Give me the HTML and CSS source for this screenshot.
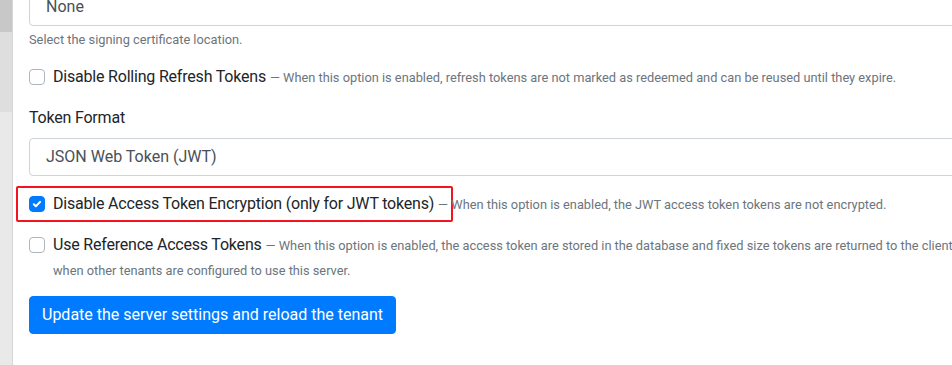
FILE: index.html
```html
<!DOCTYPE html>
<html lang="en">
<head>
    <meta charset="UTF-8">
    <title>Server Settings</title>
    <link rel="stylesheet" href="styles.css">
</head>
<body>
    <div class="layout">
        <aside class="side">
            <div class="side-thumb"></div>
            <div class="side-track"></div>
        </aside>
        <main class="content">
            <form class="settings">
                <div class="form-group">
                    <div class="form-control">None</div>
                    <small class="form-text">Select the signing certificate location.</small>
                </div>

                <div class="form-check">
                    <span class="check-box"></span>
                    <span class="check-label">Disable Rolling Refresh Tokens</span>
                    <small class="form-text">&mdash; When this option is enabled, refresh tokens are not marked as redeemed and can be reused until they expire.</small>
                </div>

                <div class="form-group">
                    <label class="form-label">Token Format</label>
                    <div class="form-control">JSON Web Token (JWT)</div>
                </div>

                <div class="form-check">
                    <span class="highlight"><span class="check-label">Disable Access Token Encryption (only for JWT tokens)</span></span>
                    <span class="check-box checked">
                        <svg viewBox="0 0 16 16" width="16" height="16"><path d="M4.8 8.2l2.1 2.1 4.2-4.4" fill="none" stroke="#fff" stroke-width="2" stroke-linecap="round" stroke-linejoin="round"/></svg>
                    </span>
                    <small class="form-text">&mdash; When this option is enabled, the JWT access token tokens are not encrypted.</small>
                </div>

                <div class="form-check">
                    <span class="check-box"></span>
                    <span class="check-label">Use Reference Access Tokens</span>
                    <small class="form-text">&mdash; When this option is enabled, the access token are stored in the database and fixed size tokens are returned to the client<br>when other tenants are configured to use this server.</small>
                </div>

                <button type="button" class="btn-primary">Update the server settings and reload the tenant</button>
            </form>
        </main>
    </div>
</body>
</html>
```

FILE: styles.css
```css
body {
    margin: 0;
    overflow: hidden;
    background-color: #fff;
    font-family: Roboto, "Liberation Sans", sans-serif;
    color: #212529;
}
.layout {
    display: flex;
    min-height: 365px;
}
.side {
    width: 12px;
    flex-shrink: 0;
    display: flex;
    flex-direction: column;
    background-color: #e9e9e9;
    border-right: 1px solid #d6d6d6;
}
.side-thumb {
    height: 32px;
    background-color: #c8c8c8;
}
.side-track {
    height: 80px;
    background-color: #dedede;
}
.content {
    flex-grow: 1;
    padding: 0 0 0 16px;
    min-width: 0;
}
.settings {
    width: 1000px;
    margin-top: -12px;
}
.form-group {
    margin-bottom: 16px;
}
.form-control {
    height: 38px;
    box-sizing: border-box;
    padding: 6px 16px;
    font-size: 16px;
    line-height: 24px;
    border: 1px solid #ced4da;
    border-radius: 4px;
    color: #495057;
}
.form-text {
    display: block;
    margin-top: 4px;
    font-size: 12.8px;
    line-height: 19px;
    color: #6c757d;
}
.form-check .form-text {
    display: inline;
    margin: 0;
    line-height: 24px;
}
.form-check {
    padding-left: 24px;
    margin: 2px 0 16px;
    font-size: 16px;
    line-height: 24px;
    position: relative;
}
.check-label, .form-label {
    letter-spacing: -0.2px;
}
.check-box {
    position: absolute;
    left: 0;
    top: 4px;
    width: 16px;
    height: 16px;
    box-sizing: border-box;
    border: 1px solid #adb5bd;
    border-radius: 4px;
    background-color: #fff;
}
.check-box.checked {
    background-color: #007bff;
    border-color: #007bff;
}
.check-box svg {
    display: block;
    margin: -1px;
}
/* red frame around the highlighted option, checkbox included */
.highlight {
    display: inline-block;
    margin: -6px -19px -6px -37px;
    padding: 4px 17px 4px 35px;
    border: 2px solid #f5141e;
    border-radius: 2px;
}
.form-label {
    display: block;
    margin-bottom: 8px;
    font-size: 16px;
    line-height: 24px;
}
.btn-primary {
    margin-top: -3px;
    height: 38px;
    padding: 6px 12px;
    font-family: inherit;
    font-size: 16px;
    line-height: 24px;
    color: #fff;
    background-color: #007bff;
    border: 1px solid #007bff;
    border-radius: 4px;
}
```
